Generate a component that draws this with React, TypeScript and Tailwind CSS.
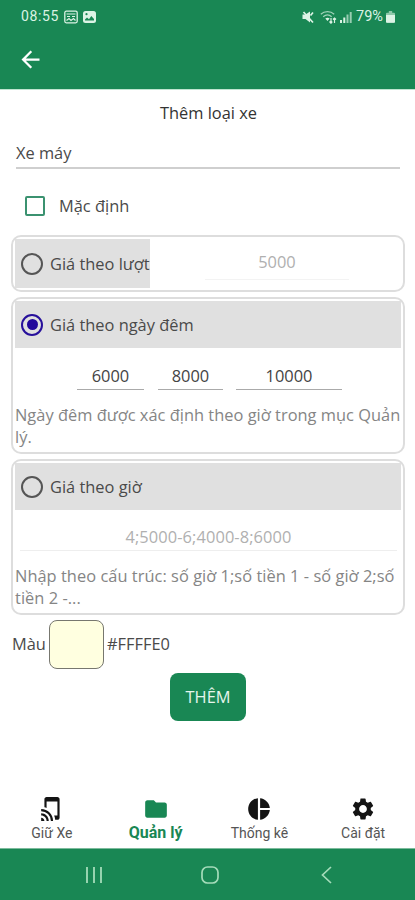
import React from "react";
import { MdTapAndPlay, MdFolder, MdPieChart, MdSettings, MdArrowBack } from "react-icons/md";

function Radio({ checked = false }: { checked?: boolean }) {
  return (
    <span
      className={
        "flex h-[22px] w-[22px] shrink-0 items-center justify-center rounded-full border-2 " +
        (checked ? "border-[#27109b]" : "border-[#555555]")
      }
    >
      {checked && <span className="h-[11px] w-[11px] rounded-full bg-[#22089b]" />}
    </span>
  );
}

function Option({ label, checked = false }: { label: string; checked?: boolean }) {
  return (
    <div className="flex h-[47px] items-center bg-[#e0e0e0] pl-[6px] text-[#4a4a4a]">
      <Radio checked={checked} />
      <span className="ml-[7px] whitespace-nowrap pt-[1px]">{label}</span>
    </div>
  );
}

function StatusBar() {
  return (
    <div className="flex h-[33px] items-center pl-[21px] font-[Roboto,sans-serif] text-[14px] text-[#dcf3e5]">
      <span className="w-[38px] whitespace-nowrap tracking-[0.6px]">08:55</span>
      <svg className="ml-[5px]" width="14" height="14" viewBox="0 0 14 14" fill="none" stroke="currentColor">
        <rect x=".8" y="1.2" width="12.4" height="11.6" rx="1.5" strokeWidth="1.3" />
        <path d="M2.5 4h9M3 6.5h3M8 6.5h3M2.5 10.5l2.5-2 2 2 2.5-2 2 2" strokeWidth="1.2" />
      </svg>
      <svg className="ml-[5px]" width="13" height="14" viewBox="0 0 13 14">
        <rect x="0" y="1" width="13" height="12" rx="2.5" fill="currentColor" />
        <path d="M2 9.5l2-2 2 1.800L8.300 6 11 9v1.500H2z" fill="#198754" />
        <circle cx="3.5" cy="4.2" r="1.1" fill="#198754" />
      </svg>
      <svg className="ml-[206px]" width="12" height="14" viewBox="0 0 12 14">
        <path d="M.5 4.500h3L8 1.500v11L3.500 9h-3z" fill="currentColor" />
        <path d="M1.500 2l9.500 10.500M8.500 5.500l2.500-3" stroke="currentColor" strokeWidth="1.7" />
      </svg>
      <svg className="ml-[6px]" width="17" height="14" viewBox="0 0 17 14" fill="none" stroke="currentColor" strokeWidth="1.2">
        <path d="M.8 4.300C4.500.8 10.500.8 14.200 4.300M3.200 6.800c2.500-2.200 6-2.200 8.500 0" opacity=".7" />
        <path d="M5.300 8.600c1.400-1 3-1 4.400 0L7.500 11z" fill="currentColor" stroke="none" />
        <path d="M11 8v5M9.500 11.500L11 13.200l1.300-1.500M14.500 13V8M13 9.500L14.500 8 16 9.500" />
      </svg>
      <svg className="ml-[3px]" width="12" height="14" viewBox="0 0 12 14" fill="currentColor">
        <path d="M0 10h2v3H0zM3.300 7.500h2V13h-2z" />
        <path d="M6.500 4.500h2V13h-2zM9.700 2h2v11h-2z" opacity=".65" />
      </svg>
      <span className="ml-[4px] w-[28px] whitespace-nowrap text-[14.5px]">79%</span>
      <svg className="ml-[2px]" width="9" height="14" viewBox="0 0 9 14" fill="currentColor">
        <path d="M2.800 1h3.400v1.800H8Q9 2.800 9 4v7.600q0 1.200-1 1.200H1q-1 0-1-1.200V4q0-1.200 1-1.200h1.800z" opacity=".6" />
        <path d="M0 5h9v6.600q0 1.200-1 1.200H1q-1 0-1-1.200z" />
      </svg>
    </div>
  );
}

const tabs = [
  { label: "Giữ Xe", Icon: MdTapAndPlay },
  { label: "Quản lý", Icon: MdFolder, active: true },
  { label: "Thống kê", Icon: MdPieChart },
  { label: "Cài đặt", Icon: MdSettings },
];

export default function App() {
  return (
    <div className="flex h-[900px] w-[415px] flex-col overflow-hidden bg-white font-['Open_Sans',sans-serif] text-[16.4px] text-[#4a4a4a]">
      <header className="h-[90px] shrink-0 border-b border-[#bfe5d0] bg-[#198754]">
        <StatusBar />
        <div className="flex h-[53px] items-center pl-[17px]">
          <MdArrowBack className="h-[27px] w-[27px] text-white" />
        </div>
      </header>

      <main className="flex flex-1 flex-col">
        <h1 className="mt-[12px] pl-[2px] text-center leading-[22px] text-[#333333]">Thêm loại xe</h1>
        <div className="mr-[15px] ml-[16px] mt-[17px] h-[28px] border-b-2 border-[#cfcfcf] leading-[23px]">Xe máy</div>
        <div className="mt-[27px] flex h-[20px] items-center pl-[25px]">
          <span className="h-[20px] w-[20px] rounded-[2px] border-2 border-[#3b9270]" />
          <span className="ml-[14px] pt-[1px]">Mặc định</span>
        </div>

        <section className="mr-[10px] ml-[11px] mt-[19px] flex h-[57px] shrink-0 rounded-[10px] border-2 border-[#dddddd] p-[2px]">
          <div className="w-[135px] [&>div]:h-[49px]">
            <Option label="Giá theo lượt" />
          </div>
          <div className="ml-[55px] h-[41px] w-[144px] border-b border-[#f3f3f3] text-center leading-[46px] text-[#b0b0b0]">
            5000
          </div>
        </section>

        <section className="mr-[10px] ml-[11px] mt-[5px] h-[157px] shrink-0 rounded-[10px] border-2 border-[#dddddd] p-[2px]">
          <Option label="Giá theo ngày đêm" checked />
          <div className="flex h-[42px] pl-[62px] text-center leading-[55px] text-[#444444]">
            <div className="w-[67px] border-b border-[#aaaaaa]">6000</div>
            <div className="ml-[14px] w-[65px] border-b border-[#aaaaaa]">8000</div>
            <div className="ml-[13px] w-[106px] border-b border-[#aaaaaa]">10000</div>
          </div>
          <p className="mt-[14px] leading-[22px] whitespace-nowrap tracking-[0.02px] text-[#858585]">
            Ngày đêm được xác định theo giờ trong mục Quản
            <br />
            lý.
          </p>
        </section>

        <section className="mr-[10px] ml-[11px] mt-[5px] h-[156px] shrink-0 rounded-[10px] border-2 border-[#dddddd] p-[2px]">
          <Option label="Giá theo giờ" />
          <div className="mr-[4px] ml-[5px] h-[41px] border-b border-[#eeeeee] text-center leading-[54px] tracking-[0.1px] text-[#b0b0b0]">
            4;5000-6;4000-8;6000
          </div>
          <p className="mt-[14px] leading-[22px] whitespace-nowrap tracking-[0.04px] text-[#858585]">
            Nhập theo cấu trúc: số giờ 1;số tiền 1 - số giờ 2;số
            <br />
            tiền 2 -...
          </p>
        </section>

        <div className="mt-[5px] flex h-[49px] items-center pl-[12px]">
          <span className="w-[37px]">Màu</span>
          <span className="h-[49px] w-[55px] rounded-[8px] border border-[#77776f] bg-[#ffffe0]" />
          <span className="ml-[3px]">#FFFFE0</span>
        </div>
        <button className="mt-[4px] ml-[170px] h-[48px] w-[76px] rounded-[8px] bg-[#198754] text-[16.4px] font-medium text-[#e6f5ec]">
          THÊM
        </button>
      </main>

      <nav className="flex h-[57px] shrink-0 font-[Roboto,sans-serif] text-[14px]">
        {tabs.map(({ label, Icon, active }) => (
          <div
            key={label}
            className={"flex flex-1 flex-col items-center pt-[5px] " + (active ? "text-[#198754]" : "text-[#141414]")}
          >
            <Icon className="h-[26px] w-[26px]" />
            <span
              className={
                "whitespace-nowrap leading-[22px] " + (active ? "text-[16px] font-bold" : "text-[#555555]")
              }
            >
              {label}
            </span>
          </div>
        ))}
      </nav>

      <footer className="flex h-[52px] shrink-0 items-center border-t border-[#7dbb9c] bg-[#198754] text-[#a5dcba]">
        <svg className="ml-[84px]" width="20" height="18" viewBox="0 0 20 18" stroke="currentColor" strokeWidth="1.8">
          <path d="M3 1v16M10 1v16M17 1v16" />
        </svg>
        <svg className="ml-[96px]" width="20" height="20" viewBox="0 0 20 20" fill="none" stroke="currentColor" strokeWidth="1.7">
          <rect x="2" y="2" width="16" height="16" rx="5.5" />
        </svg>
        <svg className="ml-[100px]" width="14" height="20" viewBox="0 0 14 20" fill="none" stroke="currentColor" strokeWidth="1.7">
          <path d="M11 2L2.500 10l8.500 8" />
        </svg>
      </footer>
    </div>
  );
}
